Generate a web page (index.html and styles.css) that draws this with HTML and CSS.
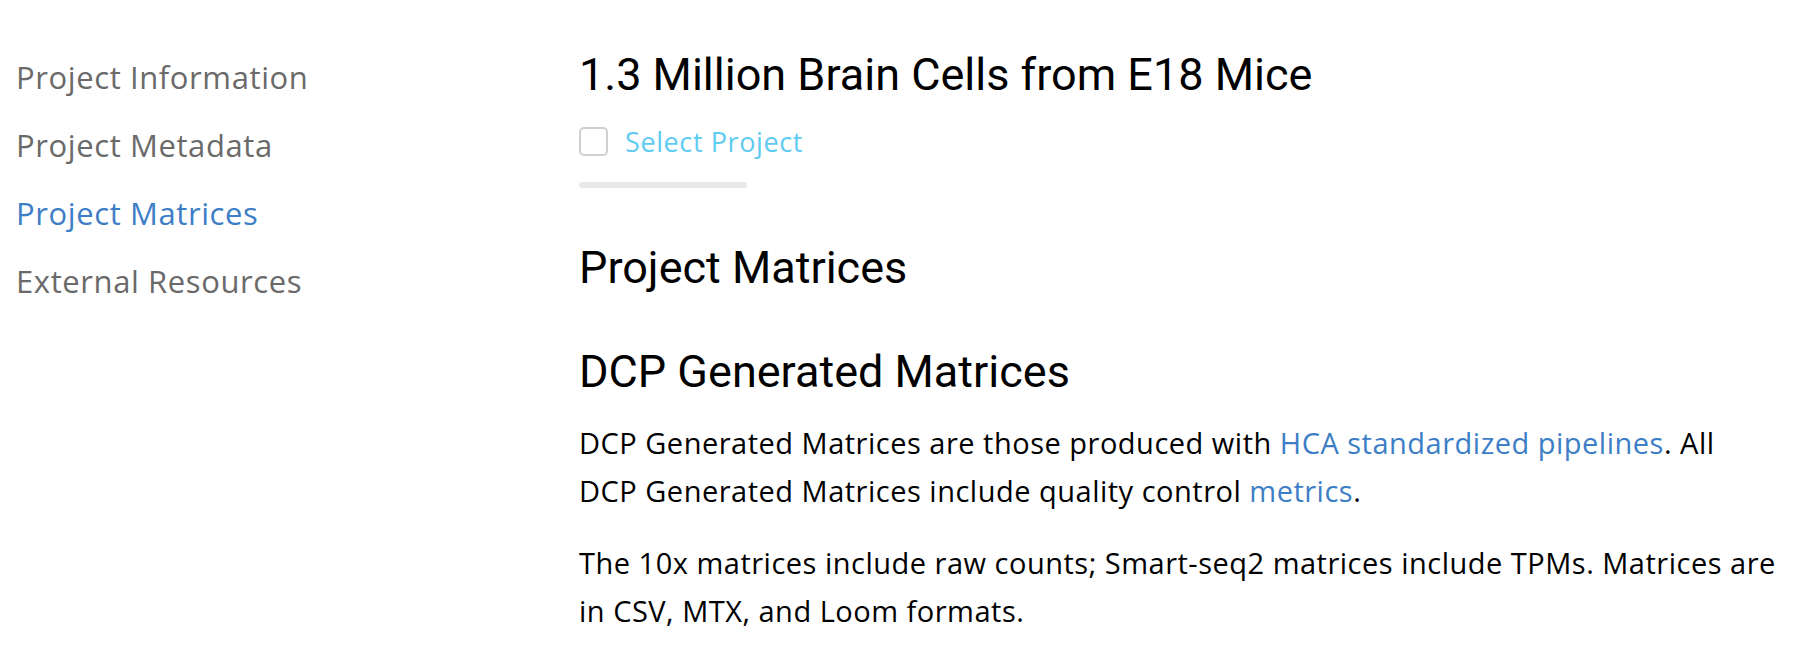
FILE: index.html
```html
<!DOCTYPE html>
<html lang="en">
<head>
<meta charset="utf-8">
<title>1.3 Million Brain Cells from E18 Mice</title>
<link rel="stylesheet" href="styles.css">
</head>
<body>
<div class="page">
  <nav class="side-nav">
    <a class="nav-item" href="#">Project Information</a>
    <a class="nav-item" href="#">Project Metadata</a>
    <a class="nav-item active" href="#">Project Matrices</a>
    <a class="nav-item" href="#">External Resources</a>
  </nav>
  <main class="content">
    <h1 class="project-title">1.3 Million Brain Cells from E18 Mice</h1>
    <label class="select-row">
      <span class="checkbox"></span>
      <span class="select-label">Select Project</span>
    </label>
    <div class="divider"></div>
    <h2 class="section-title">Project Matrices</h2>
    <h3 class="sub-title">DCP Generated Matrices</h3>
    <p class="body-text">DCP Generated Matrices are those produced with <a href="#">HCA standardized pipelines</a>. All DCP Generated Matrices include quality control <a href="#">metrics</a>.</p>
    <p class="body-text">The 10x matrices include raw counts; Smart-seq2 matrices include TPMs. Matrices are in CSV, MTX, and Loom formats.</p>
  </main>
</div>
</body>
</html>
```
FILE: styles.css
```css
html, body {
  margin: 0;
  padding: 0;
  background: #ffffff;
}

body {
  font-family: "Open Sans", "Noto Sans", sans-serif;
  color: #000000;
  overflow: hidden;
}

.page {
  display: flex;
  align-items: flex-start;
  width: 1806px;
  height: 656px;
}

.side-nav {
  display: flex;
  flex-direction: column;
  width: 563px;
  padding: 43px 0 0 16px;
  flex: none;
}

.nav-item {
  font-size: 31px;
  letter-spacing: 0.6px;
  line-height: 68px;
  color: #6a6a6a;
  text-decoration: none;
  white-space: nowrap;
}

.nav-item.active {
  color: #3d7ec6;
}

.content {
  flex: 1;
  padding: 48px 30px 0 0;
  min-width: 0;
}

.project-title,
.section-title,
.sub-title {
  font-family: Roboto, "Liberation Sans", sans-serif;
  font-weight: 400;
  font-size: 45px;
  line-height: 53px;
  margin: 0;
  color: #000000;
}

.select-row {
  display: flex;
  align-items: center;
  gap: 17px;
  margin-top: 26px;
  height: 29px;
}

.checkbox {
  box-sizing: border-box;
  width: 29px;
  height: 29px;
  border: 2px solid #cfcfcf;
  border-radius: 5px;
  background: #ffffff;
  flex: none;
}

.select-label {
  font-size: 27px;
  letter-spacing: 0.6px;
  line-height: 29px;
  color: #5ecbf0;
}

.divider {
  width: 168px;
  height: 6px;
  border-radius: 3px;
  background: #e9e9e9;
  margin-top: 26px;
}

.section-title {
  margin-top: 53px;
}

.sub-title {
  margin-top: 51px;
}

.body-text {
  font-size: 29px;
  letter-spacing: 0.5px;
  line-height: 47.5px;
  margin: 21px 0 0 0;
}

.body-text + .body-text {
  margin-top: 25px;
}

.body-text a {
  color: #3d7ec6;
  text-decoration: none;
}
```
